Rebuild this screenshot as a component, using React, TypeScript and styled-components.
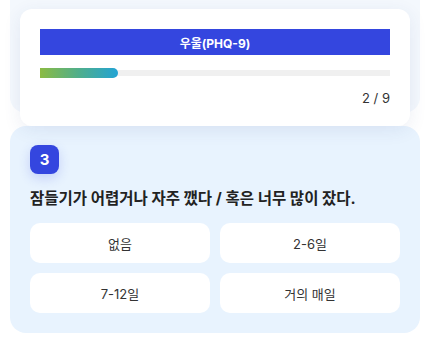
import styled, { createGlobalStyle } from 'styled-components';

const GlobalStyle = createGlobalStyle`
  html, body {
    margin: 0;
    padding: 0;
    background: #FFFFFF;
  }

  body {
    font-family: Inter, "Noto Sans CJK KR", "Noto Sans", sans-serif;
    color: #222222;
  }
`;

const Page = styled.div`
  width: 430px;
  height: 340px;
  overflow: hidden;
  padding: 0 10px;
  box-sizing: border-box;
`;

const StickyArea = styled.div`
  position: relative;
  padding: 9px 10px 0;
  z-index: 1;

  &::before {
    content: '';
    position: absolute;
    left: 0;
    right: 0;
    top: -30px;
    height: 143px;
    background: #F4F8FD;
    border-radius: 16px;
    z-index: -1;
  }
`;

const Header = styled.div`
  background: #FFFFFF;
  border-radius: 12px;
  padding: 20px 20px 20px;
  box-shadow: 0px 4px 18px rgba(40, 70, 130, 0.09);
`;

const Banner = styled.div`
  height: 26px;
  background: #3446DF;
  color: #FFFFFF;
  font-size: 12px;
  font-weight: 700;
  display: flex;
  align-items: center;
  justify-content: center;
`;

const Track = styled.div`
  margin-top: 13px;
  height: 10px;
  display: flex;
  align-items: center;
  background: linear-gradient(#F0F0F0, #F0F0F0) center / 100% 6px no-repeat;
`;

const Fill = styled.div`
  height: 10px;
  border-radius: 0 5px 5px 0;
  background: linear-gradient(90deg, #8BBB43 0%, #4FAE8C 50%, #22A3D4 100%);
`;

const Counter = styled.div`
  margin-top: 12px;
  text-align: right;
  font-size: 13px;
  line-height: 16px;
  color: #333333;
`;

const QuestionCard = styled.div`
  background: #E8F3FE;
  border-radius: 16px;
  padding: 19px 20px 20px;
`;

const Badge = styled.div`
  width: 29px;
  height: 29px;
  border-radius: 8px;
  background: #3446DF;
  color: #FFFFFF;
  font-size: 15px;
  font-weight: 700;
  display: flex;
  align-items: center;
  justify-content: center;
  box-shadow: 0px 4px 12px rgba(52, 70, 223, 0.2);
`;

const Question = styled.div`
  margin-top: 15px;
  font-size: 15.5px;
  line-height: 20px;
  font-weight: 700;
  color: #222222;
`;

const Options = styled.div`
  margin-top: 14px;
  display: grid;
  grid-template-columns: 1fr 1fr;
  gap: 10px;
`;

const Option = styled.button`
  height: 40px;
  border: none;
  border-radius: 10px;
  background: #FFFFFF;
  font-family: inherit;
  font-size: 13px;
  color: #333333;
  cursor: pointer;
`;

const options = ['없음', '2-6일', '7-12일', '거의 매일'];

const App: React.FC = () => {
  const current = 2;
  const total = 9;

  return (
    <Page>
      <GlobalStyle />
      <StickyArea>
        <Header>
          <Banner>우울(PHQ-9)</Banner>
          <Track>
            <Fill style={{ width: `${(current / total) * 100}%` }} />
          </Track>
          <Counter>{current} / {total}</Counter>
        </Header>
      </StickyArea>
      <QuestionCard>
        <Badge>3</Badge>
        <Question>잠들기가 어렵거나 자주 깼다 / 혹은 너무 많이 잤다.</Question>
        <Options>
          {options.map((label) => (
            <Option key={label}>{label}</Option>
          ))}
        </Options>
      </QuestionCard>
    </Page>
  );
};

export default App;
